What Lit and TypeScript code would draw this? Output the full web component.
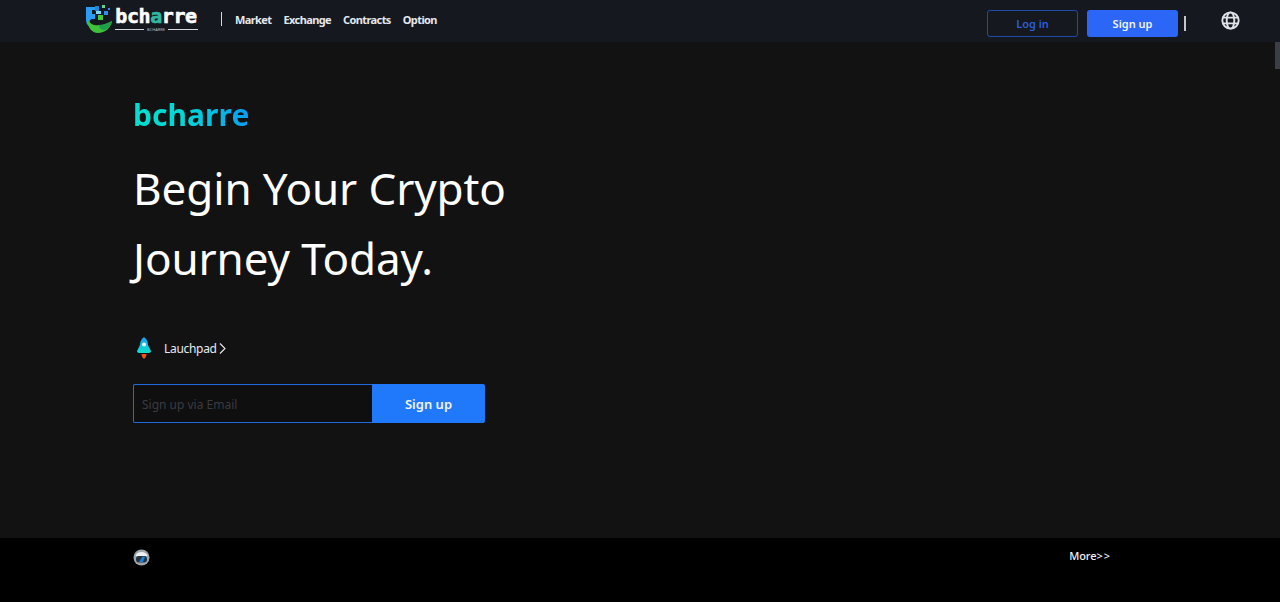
import { LitElement, html, css } from 'lit';
import { customElement } from 'lit/decorators.js';

@customElement('app-root')
export class AppRoot extends LitElement {
    static styles = css`
        :host {
            display: block;
            height: 602px;
            overflow: hidden;
            position: relative;
            font-family: 'Noto Sans', 'Open Sans', sans-serif;
            background: #121212;
            color: #fff;
        }

        /* Header */
        .header {
            height: 42px;
            background: #15181f;
            display: flex;
            align-items: center;
            padding: 0 40px 0 84px;
        }

        .logo {
            display: flex;
            align-items: flex-start;
            width: 137px;
            height: 42px;
        }

        .logo-icon {
            width: 30px;
            height: 28px;
            margin-top: 5px;
            flex: none;
        }

        .logo-text {
            margin-left: 0.5px;
            width: 83px;
            display: flex;
            flex-direction: column;
            align-items: center;
            padding-top: 5px;
        }

        .logo-word {
            font-family: 'DejaVu Sans Mono', monospace;
            font-weight: 700;
            font-size: 20px;
            line-height: 22px;
            letter-spacing: -0.4px;
            white-space: nowrap;
            -webkit-text-stroke: 0.6px currentColor;
        }

        .logo-word span {
            color: #2fb7a0;
        }

        .logo-sub {
            display: flex;
            align-items: center;
            gap: 3px;
            width: 83px;
            font-size: 4px;
            line-height: 5px;
            color: #b5b8bc;
        }

        .logo-sub i {
            flex: 1;
            height: 1px;
            background: #d5d7d9;
        }

        .divider {
            width: 1px;
            height: 14px;
            background: #d6d8da;
            margin-top: -4px;
        }

        .nav {
            display: flex;
            gap: 12px;
            margin: -3px 0 0 13px;
            font-size: 11px;
            font-weight: 700;
            letter-spacing: -0.6px;
            color: #e4e8ee;
        }

        .actions {
            margin-left: auto;
            display: flex;
            align-items: center;
            margin-top: 4px;
        }

        .btn {
            width: 91px;
            height: 27px;
            box-sizing: border-box;
            border-radius: 3px;
            display: flex;
            align-items: center;
            justify-content: center;
            font-size: 11px;
            font-weight: 600;
        }

        .btn.outline {
            border: 1px solid #1f4ba8;
            color: #2b5fd9;
            margin-right: 9px;
        }

        .btn.solid {
            background: #2b66f6;
            color: #f2f5fb;
        }

        .actions-bar {
            width: 2px;
            height: 15px;
            background: #c4c6c9;
            margin-left: 6px;
        }

        .globe {
            width: 19px;
            height: 19px;
            margin: -6px 0 0 35px;
        }

        /* Hero */
        .hero {
            height: 496px;
            box-sizing: border-box;
            padding: 54px 0 0 133px;
            background: #121212;
        }

        .brand {
            font-size: 30px;
            font-weight: 700;
            line-height: 38px;
            letter-spacing: 0.05px;
            width: max-content;
            background: linear-gradient(90deg, #00e0d0 0%, #00d8d8 45%, #0a9cf0 100%);
            -webkit-background-clip: text;
            background-clip: text;
            color: transparent;
        }

        h1 {
            margin: 19px 0 0;
            font-size: 44px;
            font-weight: 400;
            line-height: 70px;
            letter-spacing: -0.1px;
            color: #fff;
        }

        .launch {
            display: flex;
            align-items: center;
            margin: 43px 0 0 3px;
            height: 24px;
            font-size: 12px;
            letter-spacing: -0.3px;
            color: #e8eaf0;
        }

        .launch svg.rocket {
            width: 16px;
            height: 22px;
            margin-right: 12px;
        }

        .launch svg.chev {
            width: 7px;
            height: 11px;
            margin-left: 2px;
        }

        .signup {
            display: flex;
            width: 352px;
            height: 39px;
            margin-top: 24px;
        }

        .signup input {
            flex: none;
            width: 239px;
            box-sizing: border-box;
            background: #0f0f10;
            border: 1px solid #1f6ae0;
            border-right: none;
            border-radius: 2px 0 0 2px;
            padding: 1px 8px 0;
            font: 12px 'Noto Sans', sans-serif;
            outline: none;
            color: #fff;
        }

        .signup input::placeholder {
            color: #3a3c42;
        }

        .signup button {
            flex: 1;
            border: none;
            padding: 1px 0 0;
            background: #2079fb;
            color: #f0f4fb;
            font: 600 13px 'Noto Sans', sans-serif;
            border-radius: 0 2px 2px 0;
        }

        /* Footer strip */
        .strip {
            height: 64px;
            background: #000;
            display: flex;
            justify-content: space-between;
            padding: 11px 170px 0 133px;
            box-sizing: border-box;
        }

        .strip svg {
            width: 17px;
            height: 17px;
        }

        .more {
            font-size: 11px;
            line-height: 14px;
            font-weight: 500;
            letter-spacing: -0.1px;
            color: #f0f0f0;
        }

        .more b {
            font-weight: 500;
            letter-spacing: 1px;
            margin-right: -1px;
        }

        /* page scrollbar thumb, lies over the hero */
        .thumb {
            position: absolute;
            right: 0;
            top: 42px;
            width: 5px;
            height: 27px;
            background: #3b3e44;
        }
    `;

    render() {
        return html`
            <div class="header">
                <div class="logo">
                    <svg class="logo-icon" viewBox="0 0 30 28">
                        <path d="M2 2h9v3h-3v4h3v5h-2c-3 0-4 2-3 5l3 4-3-1c-3-2-4-4-4-7z" fill="#2a9df4"/>
                        <rect x="11" y="1" width="4" height="5" fill="#1f86d8"/>
                        <rect x="12" y="6" width="5" height="3" fill="#7fd6f5"/>
                        <rect x="18" y="0" width="3" height="3" fill="#62d48a"/>
                        <rect x="14" y="10" width="5" height="5" fill="#46c83e"/>
                        <rect x="20" y="6" width="4" height="4" fill="#2d8ff0"/>
                        <rect x="24" y="3" width="2" height="2" fill="#2d8ff0"/>
                        <path d="M4 15c2 4 6 6 11 5 5 0 9-2 13-4-1 7-7 12-14 12-6 0-11-6-10-13z" fill="#3fc23a"/>
                        <path d="M15 20c5 0 9-2 13-4-1 4-3 7-7 9-4 0-6-2-6-5z" fill="#1e9d4a"/>
                    </svg>
                    <div class="logo-text">
                        <div class="logo-word">bch<span>a</span>rre</div>
                        <div class="logo-sub"><i></i>BCHARRE<i></i></div>
                    </div>
                </div>
                <div class="divider"></div>
                <nav class="nav">
                    <span>Market</span>
                    <span>Exchange</span>
                    <span>Contracts</span>
                    <span>Option</span>
                </nav>
                <div class="actions">
                    <div class="btn outline">Log in</div>
                    <div class="btn solid">Sign up</div>
                    <div class="actions-bar"></div>
                    <svg class="globe" viewBox="0 0 20 20" fill="none" stroke="#dfe2e6" stroke-width="2">
                        <circle cx="10" cy="10" r="8.600"/>
                        <ellipse cx="10" cy="10" rx="4" ry="8.600"/>
                        <path d="M2 7h16M2 13h16"/>
                    </svg>
                </div>
            </div>

            <section class="hero">
                <div class="brand">bcharre</div>
                <h1>Begin Your Crypto<br />Journey Today.</h1>
                <div class="launch">
                    <svg class="rocket" viewBox="0 0 16 22">
                        <defs>
                            <linearGradient id="rk" x1="0" y1="0" x2="0" y2="1">
                                <stop offset="0" stop-color="#1a9cf5"/>
                                <stop offset="1" stop-color="#10e0c8"/>
                            </linearGradient>
                        </defs>
                        <path d="M8 0c3 2 4 5 4 8l3 6c0 1-1 2-2 2H3c-1 0-2-1-2-2l3-6c0-3 1-6 4-8z" fill="url(#rk)"/>
                        <circle cx="8" cy="7.500" r="2" fill="#eafcff"/>
                        <path d="M5.500 17h5c0 2-1 4-2.500 5-1.500-1-2.500-3-2.500-5z" fill="#e8541c"/>
                    </svg>
                    Lauchpad
                    <svg class="chev" viewBox="0 0 7 11" fill="none" stroke="#e8eaf0" stroke-width="1.100">
                        <path d="M1 .5l5 5-5 5"/>
                    </svg>
                </div>
                <div class="signup">
                    <input type="text" placeholder="Sign up via Email" />
                    <button>Sign up</button>
                </div>
            </section>

            <div class="strip">
                <svg viewBox="0 0 17 17">
                    <circle cx="8.500" cy="8.500" r="8" fill="#9ea6ac"/>
                    <path d="M2.500 7c1-3 3-4 6-4s5 1 6 4z" fill="#eef0f2"/>
                    <rect x="3" y="7" width="11" height="6.500" rx="3" fill="#26343f"/>
                    <path d="M9.500 7.500L6 13h4l2-5z" fill="#1c7fd8"/>
                </svg>
                <span class="more">More<b>&gt;&gt;</b></span>
            </div>
            <div class="thumb"></div>
        `;
    }
}
